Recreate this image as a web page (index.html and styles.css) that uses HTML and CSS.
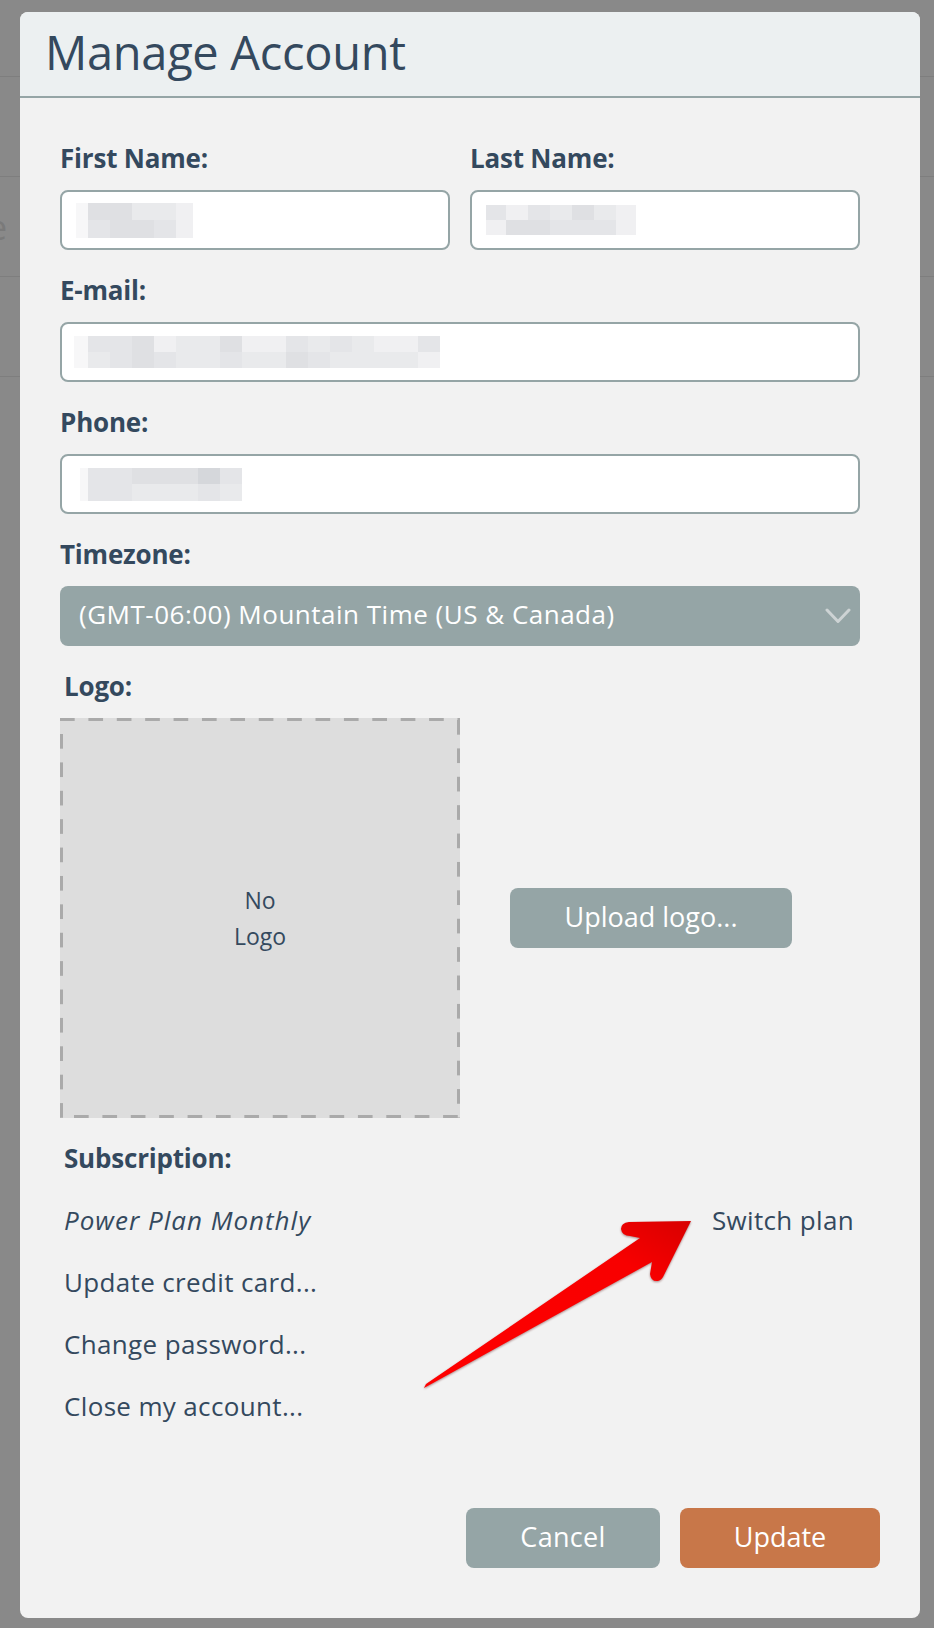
FILE: index.html
```html
<!DOCTYPE html>
<html lang="en">
<head>
<meta charset="utf-8">
<title>Manage Account</title>
<link rel="stylesheet" href="styles.css">
</head>
<body>
<div class="backdrop">
  <div class="bd-row"></div>
  <div class="bd-row"></div>
  <div class="bd-row"><span class="bd-text">e</span></div>
  <div class="bd-row"></div>
</div>

<div class="modal">
  <header class="modal-header"><h1>Manage Account</h1></header>
  <form class="modal-body">
    <div class="row-2">
      <div class="field">
        <label class="label">First Name:</label>
        <div class="input">
          <span class="mosaic m-first">
            <i class="k0"></i><i class="k4"></i><i class="k4"></i><i class="k2"></i><i class="k2"></i><i class="k1"></i>
            <i class="k0"></i><i class="k3"></i><i class="k4"></i><i class="k4"></i><i class="k3"></i><i class="k1"></i>
          </span>
        </div>
      </div>
      <div class="field">
        <label class="label">Last Name:</label>
        <div class="input">
          <span class="mosaic m-last">
            <i class="k3"></i><i class="k1"></i><i class="k3"></i><i class="k2"></i><i class="k4"></i><i class="k2"></i><i class="k1"></i>
            <i class="k1"></i><i class="k4"></i><i class="k4"></i><i class="k3"></i><i class="k3"></i><i class="k3"></i><i class="k1"></i>
          </span>
        </div>
      </div>
    </div>

    <div class="field">
      <label class="label">E-mail:</label>
      <div class="input">
        <span class="mosaic m-email">
          <i class="k0"></i><i class="k3"></i><i class="k3"></i><i class="k4"></i><i class="k1"></i><i class="k2"></i><i class="k2"></i><i class="k4"></i><i class="k1"></i><i class="k1"></i><i class="k3"></i><i class="k2"></i><i class="k3"></i><i class="k2"></i><i class="k1"></i><i class="k1"></i><i class="k3"></i>
          <i class="k0"></i><i class="k2"></i><i class="k3"></i><i class="k4"></i><i class="k3"></i><i class="k2"></i><i class="k2"></i><i class="k3"></i><i class="k2"></i><i class="k2"></i><i class="k4"></i><i class="k3"></i><i class="k2"></i><i class="k2"></i><i class="k2"></i><i class="k2"></i><i class="k1"></i>
        </span>
      </div>
    </div>

    <div class="field">
      <label class="label">Phone:</label>
      <div class="input">
        <span class="mosaic m-phone">
          <i class="k0"></i><i class="k3"></i><i class="k3"></i><i class="k4"></i><i class="k4"></i><i class="k4"></i><i class="k5"></i><i class="k3"></i>
          <i class="k0"></i><i class="k3"></i><i class="k3"></i><i class="k2"></i><i class="k2"></i><i class="k2"></i><i class="k3"></i><i class="k2"></i>
        </span>
      </div>
    </div>

    <div class="field">
      <label class="label">Timezone:</label>
      <div class="select">
        <span>(GMT-06:00) Mountain Time (US &amp; Canada)</span>
        <svg class="chevron" width="26" height="16" viewBox="0 0 26 16" aria-hidden="true">
          <polyline points="2,2 13,13.5 24,2" fill="none" stroke="#cdd3d4" stroke-width="3" stroke-linecap="round" stroke-linejoin="round"/>
        </svg>
      </div>
    </div>

    <div class="field">
      <label class="label indent">Logo:</label>
      <div class="logo-row">
        <div class="logo-box">No<br>Logo</div>
        <button type="button" class="btn btn-gray btn-upload">Upload logo...</button>
      </div>
    </div>

    <section class="subscription">
      <label class="label sub-label">Subscription:</label>
      <div class="sub-list">
        <div class="sub-row"><em>Power Plan Monthly</em><span>Switch plan</span></div>
        <div class="sub-row"><span>Update credit card...</span></div>
        <div class="sub-row"><span>Change password...</span></div>
        <div class="sub-row"><span>Close my account...</span></div>
      </div>
    </section>
  </form>
  <footer class="modal-footer">
    <button type="button" class="btn btn-gray btn-cancel">Cancel</button>
    <button type="button" class="btn btn-orange btn-update">Update</button>
  </footer>
</div>

<svg class="annotation" width="934" height="1628" viewBox="0 0 934 1628" aria-hidden="true">
  <defs>
    <linearGradient id="redgrad" x1="0" y1="1" x2="1" y2="0">
      <stop offset="0" stop-color="#ff0000"/>
      <stop offset="0.75" stop-color="#f80000"/>
      <stop offset="1" stop-color="#d80000"/>
    </linearGradient>
  </defs>
  <path class="arrow" d="M424 1388 L652 1262 L650 1274 Q651 1282 658 1281 Q662 1280 664 1275 L691 1221 L629 1222 Q621 1223 621 1229 Q622 1236 630 1236 L640 1238 L426 1384 Z" fill="url(#redgrad)"/>
</svg>
</body>
</html>
```

FILE: styles.css
```css
* { box-sizing: border-box; }

html, body {
  margin: 0;
  padding: 0;
}

body {
  width: 934px;
  height: 1628px;
  background: #898989;
  font-family: "Open Sans", Lato, "Liberation Sans", sans-serif;
  color: #34495e;
  position: relative;
  overflow: hidden;
}

/* dimmed page behind the dialog */
.bd-row {
  height: 100px;
  border-bottom: 1px solid #7e7e7e;
  display: flex;
  align-items: center;
}
.bd-row:first-child { height: 77px; }
.bd-text {
  font-size: 34px;
  color: #7a7a7a;
  margin-left: -12px;
}

/* dialog */
.modal {
  position: absolute;
  left: 20px;
  top: 12px;
  width: 900px;
  height: 1606px;
  background: #f2f2f2;
  border-radius: 8px;
  overflow: hidden;
  display: flex;
  flex-direction: column;
}

.modal-header {
  height: 86px;
  background: #ecf0f1;
  border-bottom: 2px solid #95a5a6;
  padding: 12px 0 0 25px;
}
.modal-header h1 {
  margin: 0;
  font-size: 47px;
  line-height: 56px;
  font-weight: 400;
  letter-spacing: -0.3px;
  color: #34495e;
}

.modal-body {
  padding: 45px 60px 0 40px;
  margin: 0;
}

.row-2 {
  display: grid;
  grid-template-columns: 1fr 1fr;
  gap: 20px;
}

.field { margin-bottom: 25px; }

.label {
  display: block;
  font-weight: 700;
  font-size: 26px;
  line-height: 30px;
  margin-bottom: 17px;
  letter-spacing: -0.2px;
  color: #34495e;
}
.label.indent { padding-left: 4px; }

.input {
  height: 60px;
  background: #fff;
  border: 2px solid #95a5a6;
  border-radius: 8px;
  display: flex;
  align-items: center;
  padding-left: 14px;
}

/* pixelated redactions */
.mosaic { display: grid; }
.mosaic i { display: block; }
.m-first { grid-template-columns: 12px repeat(4, 22px) 17px; grid-template-rows: 17px 18px; }
.m-last { grid-template-columns: 20px repeat(5, 22px) 20px; grid-template-rows: 15px 15px; }
.m-email { grid-template-columns: 14px repeat(16, 22px); grid-template-rows: 16px 16px; margin-left: -2px; }
.m-phone { grid-template-columns: 8px repeat(7, 22px); grid-template-rows: 16px 17px; margin-left: 4px; }
.k0 { background: #f7f7f8; }
.k1 { background: #f0f0f2; }
.k2 { background: #e9eaec; }
.k3 { background: #e4e5e8; }
.k4 { background: #dfe0e3; }
.k5 { background: #d5d7db; }

.select {
  height: 60px;
  background: #95a5a6;
  border-radius: 8px;
  color: #fff;
  font-size: 26px;
  letter-spacing: 0.5px;
  display: flex;
  align-items: center;
  justify-content: space-between;
  padding: 0 9px 4px 19px;
}
.chevron { margin-top: 4px; }

.logo-row {
  display: flex;
  align-items: center;
  gap: 50px;
}

.logo-box {
  width: 400px;
  height: 400px;
  display: flex;
  align-items: center;
  justify-content: center;
  text-align: center;
  font-size: 23px;
  line-height: 36px;
  color: #34495e;
  background:
    linear-gradient(to right, #aaaaaa 52%, transparent 52%) 0 0 / 28.4px 3px repeat-x,
    linear-gradient(to right, #aaaaaa 52%, transparent 52%) 14px 100% / 28.4px 3px repeat-x,
    linear-gradient(to bottom, #aaaaaa 52%, transparent 52%) 0 16px / 3px 28.4px repeat-y,
    linear-gradient(to bottom, #aaaaaa 52%, transparent 52%) 100% 2px / 3px 28.4px repeat-y,
    #dddddd;
}

.btn {
  height: 60px;
  border: none;
  border-radius: 8px;
  padding: 0 0 4px;
  font-family: "Open Sans", Lato, "Liberation Sans", sans-serif;
  font-size: 27px;
  color: #fff;
  cursor: pointer;
}
.btn-gray { background: #95a5a6; }
.btn-orange { background: #c87749; }
.btn-upload { width: 282px; }
.btn-cancel { width: 194px; letter-spacing: 0.3px; }
.btn-update { width: 200px; }

.subscription {
  padding: 0 6px 0 4px;
}
.label.sub-label { margin-bottom: 32px; }

.sub-list {
  display: flex;
  flex-direction: column;
  gap: 32px;
  font-size: 26px;
  line-height: 30px;
  letter-spacing: 0.35px;
}
.sub-row {
  display: flex;
  justify-content: space-between;
}
.sub-row em { font-style: italic; letter-spacing: 1px; }

.modal-footer {
  margin-top: auto;
  display: flex;
  justify-content: flex-end;
  gap: 20px;
  padding: 0 40px 50px;
}

/* screenshot annotation drawn over the dialog */
.annotation {
  position: absolute;
  left: 0;
  top: 0;
  pointer-events: none;
}
.arrow {
  filter: drop-shadow(0.5px 1px 0.8px rgba(80, 0, 0, 0.45));
}
```
